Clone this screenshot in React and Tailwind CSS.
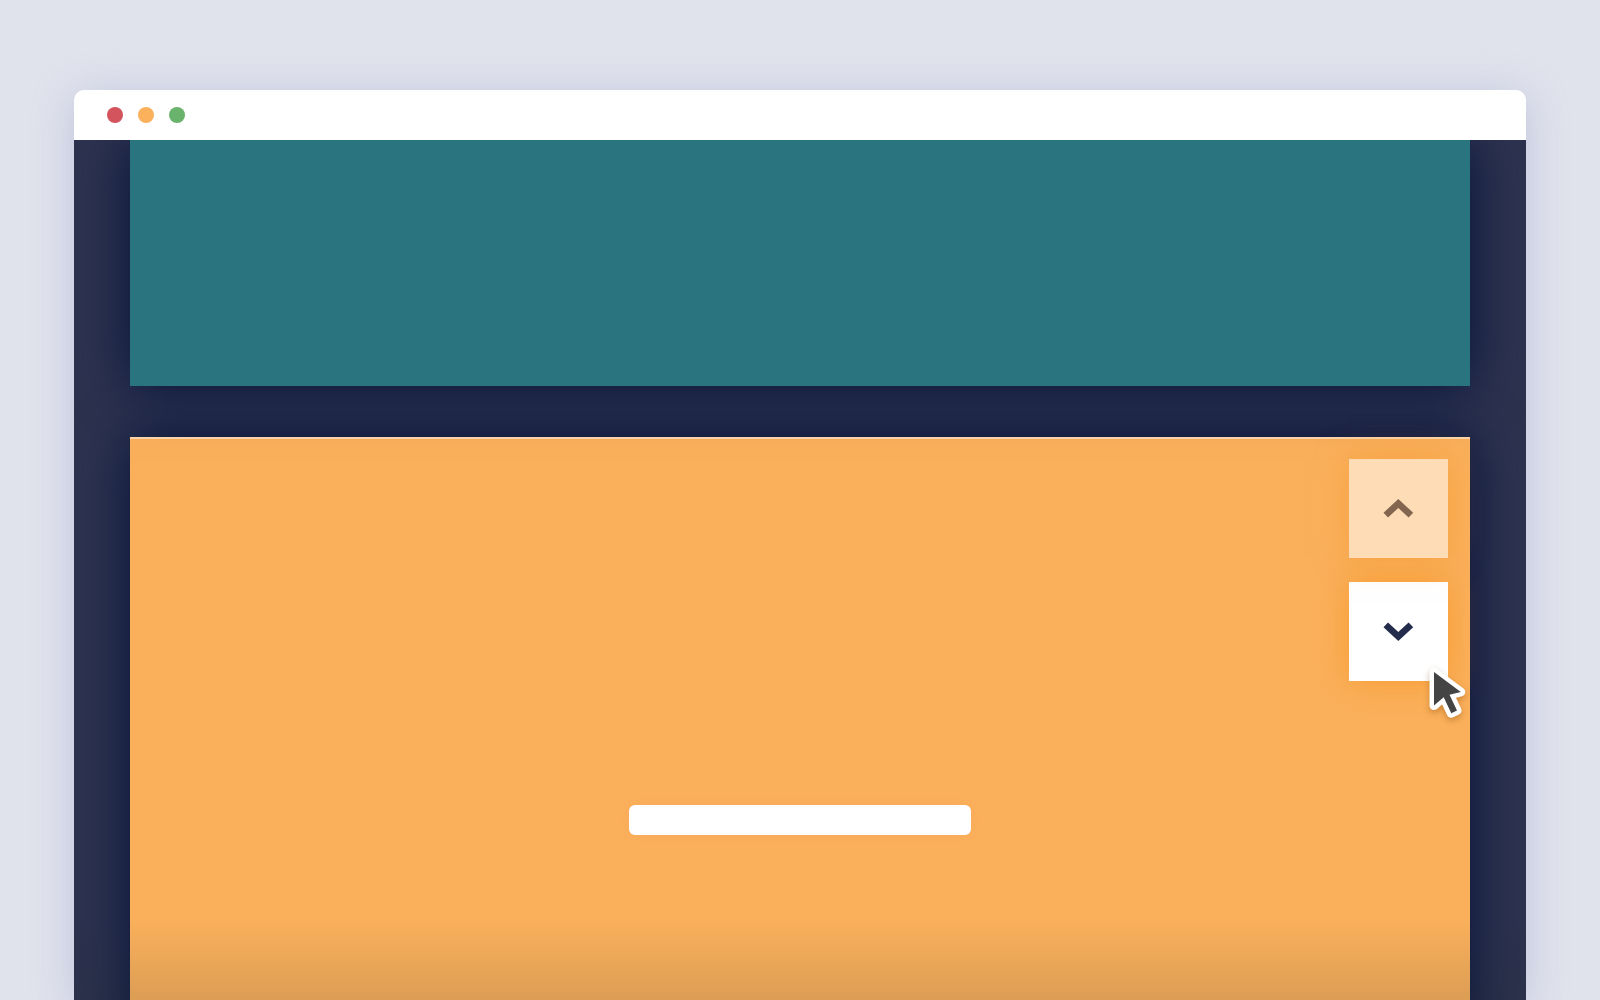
function Chevron({ down = false }) {
  return (
    <svg width="31" height="21" viewBox="0 0 31 21" fill="currentColor" aria-hidden="true">
      {down ? (
        <path d="M5 1.4 L15.3 11 L25.6 1.4 L30.2 6.2 L15.3 20 L0.5 6.2 Z" />
      ) : (
        <path d="M15.3 1 L30.2 14.8 L25.6 19.4 L15.3 10 L5 19.4 L0.5 14.8 Z" />
      )}
    </svg>
  );
}

function Cursor() {
  return (
    <svg
      className="pointer-events-none absolute -right-5 -bottom-10 drop-shadow-[0_3px_3px_rgba(120,60,0,0.35)]"
      width="40"
      height="56"
      viewBox="0 0 40 56"
      aria-hidden="true"
    >
      <path
        d="M6 7 V40.5 L15.7 32.2 L23.3 48.2 L29 45.5 L21.5 29.8 L32.8 27 Z"
        fill="#444444"
        stroke="#ffffff"
        strokeWidth="9"
        strokeLinejoin="round"
        paintOrder="stroke"
      />
    </svg>
  );
}

function TitleBar() {
  return (
    <header className="flex h-[50px] shrink-0 items-center gap-[15px] rounded-t-[10px] bg-white px-[33px]">
      <span className="size-4 rounded-full bg-[#d3545c]" />
      <span className="size-4 rounded-full bg-[#fbb05b]" />
      <span className="size-4 rounded-full bg-[#69b36d]" />
    </header>
  );
}

export default function App() {
  return (
    <div className="h-screen overflow-hidden bg-[#e0e3ec] px-[74px] pt-[90px] font-['Open_Sans',sans-serif]">
      <div className="relative flex h-full flex-col rounded-t-[10px] shadow-[0_6px_40px_rgba(155,155,205,0.45)]">
        <TitleBar />
        <main className="flex min-h-0 flex-1 flex-col gap-[51px] overflow-hidden bg-[#2d334f] px-14">
          <section className="relative z-10 h-[246px] shrink-0 bg-[#2a747f] shadow-[0_0_50px_#06123a]" />
          <section className="flex h-[768px] shrink-0 flex-col items-center border-t-2 border-[#fdd7ab] bg-[#fab05b] shadow-[0_0_50px_#06123a]">
            <nav className="mt-5 mr-[22px] flex flex-col gap-6 self-end" aria-label="Sections">
              <button
                type="button"
                aria-label="Previous section"
                className="relative z-10 flex size-[99px] items-center justify-center bg-[#fddcb6] text-[#846650] shadow-[0_0_30px_rgba(248,150,40,0.5)]"
              >
                <Chevron />
              </button>
              <button
                type="button"
                aria-label="Next section"
                className="relative flex size-[99px] items-center justify-center bg-white text-[#232c4d] shadow-[0_0_30px_rgba(248,146,30,0.7)]"
              >
                <Chevron down />
                <Cursor />
              </button>
            </nav>
            <div className="mt-[124px] h-[30px] w-[342px] rounded-md bg-white shadow-[0_0_12px_rgba(248,146,70,0.2)]" />
          </section>
        </main>
        <div className="pointer-events-none absolute inset-x-0 bottom-0 z-20 h-20 bg-linear-to-b from-[#232c2d]/0 to-[#232c2d]/14" />
      </div>
    </div>
  );
}
